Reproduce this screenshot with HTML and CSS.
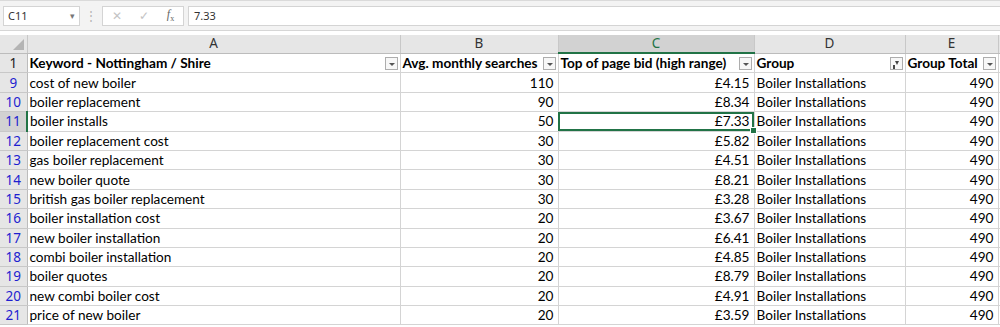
FILE: index.html
```html
<!DOCTYPE html>
<html lang="en">
<head>
    <meta charset="UTF-8">
    <title>Keyword sheet</title>
    <link rel="stylesheet" href="styles.css">
</head>
<body>

    <div class="formula-bar">
        <div class="name-box">C11<span class="caret">&#9662;</span></div>
        <div class="grip">&#8942;</div>
        <div class="fx-box">
            <span class="fx-btn">&#10005;</span>
            <span class="fx-btn">&#10003;</span>
            <span class="fx-btn fx"><i>f</i><sub>x</sub></span>
        </div>
        <div class="formula-input">7.33</div>
    </div>

    <table class="sheet">
        <colgroup>
            <col style="width:27px">
            <col style="width:373px">
            <col style="width:158px">
            <col style="width:196px">
            <col style="width:151px">
            <col style="width:93px">
            <col>
        </colgroup>
        <thead>
            <tr class="col-heads">
                <th class="corner"><span class="tri"></span></th>
                <th>A</th>
                <th>B</th>
                <th class="active">C</th>
                <th>D</th>
                <th>E</th>
                <th class="rest"></th>
            </tr>
        </thead>
        <tbody id="rows">
            <tr class="title-row">
                <td class="rh">1</td>
                <td class="t">Keyword - Nottingham / Shire<span class="flt"></span></td>
                <td class="t">Avg. monthly searches<span class="flt"></span></td>
                <td class="t">Top of page bid (high range)<span class="flt"></span></td>
                <td class="t">Group<span class="flt on"></span></td>
                <td class="t">Group Total<span class="flt"></span></td>
                <td class="rest"></td>
            </tr>
        </tbody>
    </table>

    <script>
        var data = [
            [9, "cost of new boiler", 110, "£4.15"],
            [10, "boiler replacement", 90, "£8.34"],
            [11, "boiler installs", 50, "£7.33"],
            [12, "boiler replacement cost", 30, "£5.82"],
            [13, "gas boiler replacement", 30, "£4.51"],
            [14, "new boiler quote", 30, "£8.21"],
            [15, "british gas boiler replacement", 30, "£3.28"],
            [16, "boiler installation cost", 20, "£3.67"],
            [17, "new boiler installation", 20, "£6.41"],
            [18, "combi boiler installation", 20, "£4.85"],
            [19, "boiler quotes", 20, "£8.79"],
            [20, "new combi boiler cost", 20, "£4.91"],
            [21, "price of new boiler", 20, "£3.59"]
        ];
        var body = document.getElementById("rows");
        data.forEach(function (r) {
            var tr = document.createElement("tr");
            var sel = r[0] === 11;
            tr.innerHTML =
                '<td class="rh blue' + (sel ? ' active' : '') + '">' + r[0] + '</td>' +
                '<td>' + r[1] + '</td>' +
                '<td class="num">' + r[2] + '</td>' +
                '<td class="num' + (sel ? ' selected' : '') + '">' + r[3] + (sel ? '<span class="handle"></span>' : '') + '</td>' +
                '<td>Boiler Installations</td>' +
                '<td class="num">490</td>' +
                '<td class="rest"></td>';
            body.appendChild(tr);
        });
    </script>

</body>
</html>
```

FILE: styles.css
```css
body {
    margin: 0;
    background: #fff;
    font-family: Lato, "Liberation Sans", sans-serif;
    overflow: hidden;
}
.formula-bar {
    display: flex;
    align-items: center;
    height: 31px;
    padding: 0 0 0 3px;
    background: #f3f3f3;
    border-top: 1px solid #dadada;
    border-bottom: 1px solid #d6d6d6;
    box-sizing: border-box;
    margin-bottom: 4px;
    font-size: 12px;
    color: #333;
}
.name-box {
    width: 77px;
    height: 20px;
    box-sizing: border-box;
    background: #fff;
    border: 1px solid #d4d4d4;
    display: flex;
    align-items: center;
    justify-content: space-between;
    padding: 0 4px 0 4px;
    font-size: 11px;
    font-family: "Noto Sans", sans-serif;
}
.caret {
    color: #777;
    font-size: 9px;
}
.grip {
    width: 22px;
    text-align: center;
    color: #b5b5b5;
    font-size: 12px;
}
.fx-box {
    width: 82px;
    height: 20px;
    box-sizing: border-box;
    background: #fff;
    border: 1px solid #d4d4d4;
    display: flex;
    align-items: center;
    justify-content: space-around;
    color: #c4c4c4;
    font-size: 12px;
}
.fx-box .fx {
    color: #666;
    font-family: "Liberation Serif", serif;
    font-size: 12px;
}
.fx-box .fx sub {
    font-size: 8px;
}
.formula-input {
    flex: 1;
    height: 20px;
    box-sizing: border-box;
    margin-left: 4px;
    background: #fff;
    border: 1px solid #d4d4d4;
    border-right: none;
    display: flex;
    align-items: center;
    padding-left: 5px;
    font-family: "Noto Sans", sans-serif;
    font-size: 11px;
}
.sheet {
    border-collapse: collapse;
    table-layout: fixed;
    width: 1000px;
    font-size: 13.6px;
    color: #000;
}
.sheet th {
    height: 17px;
    padding: 0;
    background: #e6e6e6;
    border-right: 1px solid #c8c8c8;
    border-bottom: 1px solid #bcbcbc;
    font-weight: normal;
    font-size: 13.5px;
    line-height: 17px;
    color: #333;
    font-family: "Noto Sans", sans-serif;
}
.sheet th.active {
    background: #d2d2d2;
    color: #217346;
    border-bottom: 2px solid #217346;
}
.sheet th.rest {
    border-right: none;
}
.corner {
    position: relative;
}
.tri {
    position: absolute;
    right: 3px;
    bottom: 3px;
    width: 0;
    height: 0;
    border-left: 11px solid transparent;
    border-bottom: 11px solid #b4b4b4;
}
.sheet td {
    height: 18.4px;
    padding: 0 2px 0 2px;
    border-right: 1px solid #d4d4d4;
    border-bottom: 1px solid #d4d4d4;
    white-space: nowrap;
    overflow: hidden;
    position: relative;
    line-height: 18px;
}
.sheet td.rest {
    border-right: none;
}
.sheet td.rh {
    background: #e6e6e6;
    text-align: center;
    padding: 0;
    border-right: 1px solid #bcbcbc;
    border-bottom-color: #c8c8c8;
    font-family: "Noto Sans", sans-serif;
    font-size: 13.5px;
    color: #222;
}
.sheet td.rh.blue {
    color: #1f1fd0;
}
.sheet td.rh.active {
    background: #d2d2d2;
    border-right: 2px solid #217346;
}
.sheet td.num {
    text-align: right;
    padding-right: 4px;
}
.sheet td.t {
    font-weight: bold;
}
.flt {
    position: absolute;
    right: 2px;
    top: 3px;
    width: 13px;
    height: 13px;
    box-sizing: border-box;
    border: 1px solid #adadad;
    background: #f7f7f7;
}
.flt::after {
    content: "";
    position: absolute;
    left: 3px;
    top: 5px;
    border-left: 3px solid transparent;
    border-right: 3px solid transparent;
    border-top: 3px solid #555;
}
.flt.on::after {
    left: 4px;
    top: 3px;
    border-left: 2px solid transparent;
    border-right: 2px solid transparent;
    border-top: 4px solid #444;
}
.flt.on::before {
    content: "";
    position: absolute;
    left: 2px;
    top: 7px;
    width: 2px;
    height: 4px;
    background: #444;
}
.sheet td.selected {
    outline: 2px solid #217346;
    outline-offset: -2px;
    overflow: visible;
}
.handle {
    position: absolute;
    right: -3px;
    bottom: -3px;
    width: 5px;
    height: 5px;
    background: #217346;
    border: 1px solid #fff;
    z-index: 2;
}
```
